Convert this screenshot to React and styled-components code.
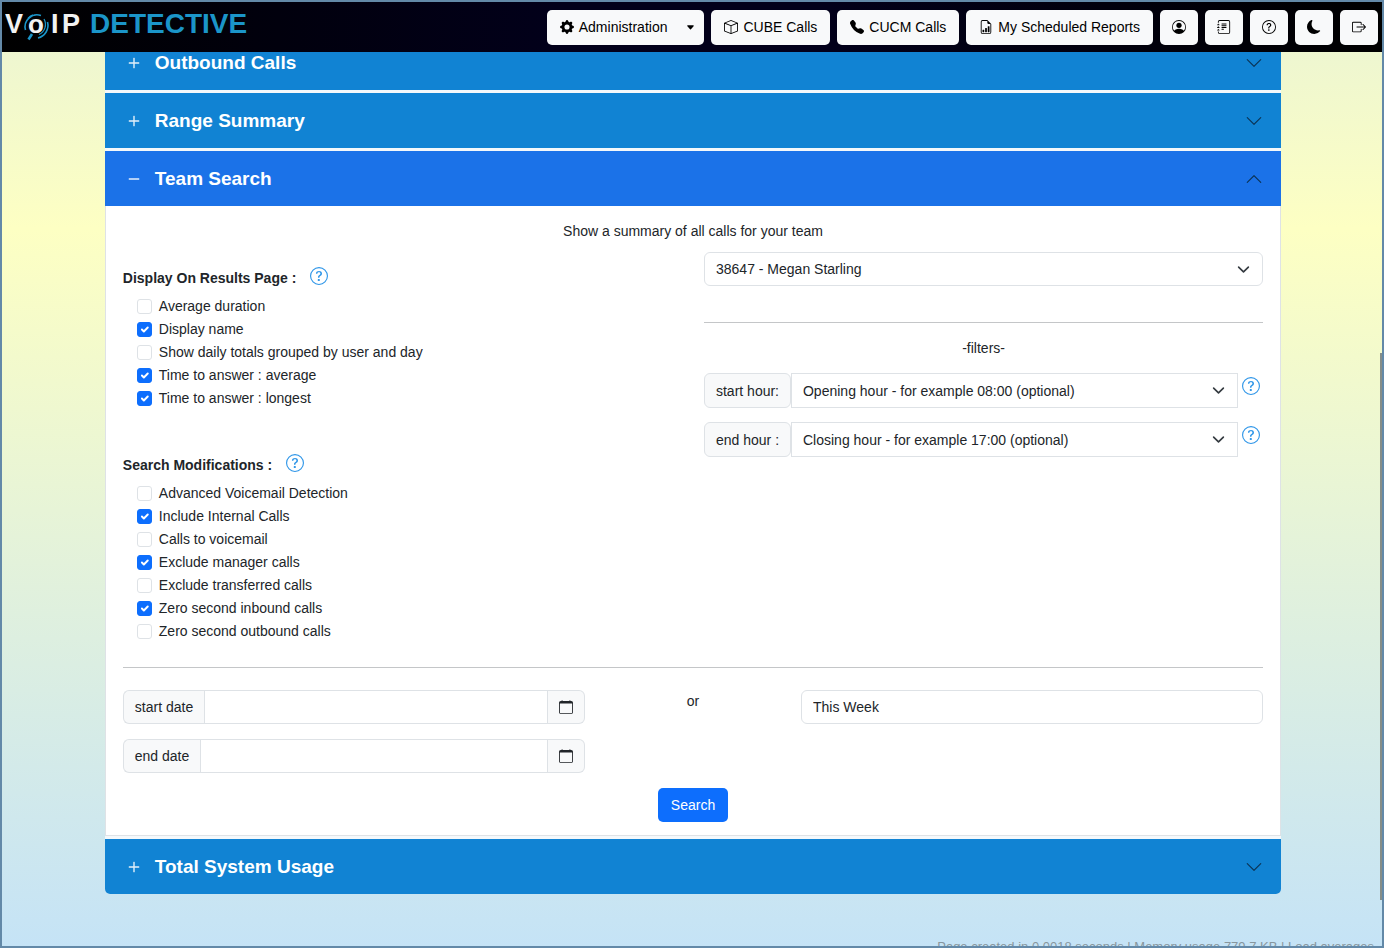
import React, { useId, useState } from 'react'
import styled, { createGlobalStyle, css } from 'styled-components'
import {
    BsGearFill,
    BsBox,
    BsTelephoneFill,
    BsFileEarmarkBarGraph,
    BsPersonCircle,
    BsJournalText,
    BsQuestionCircle,
    BsMoonFill,
    BsBoxArrowRight,
    BsCalendar,
    BsChevronDown,
    BsPlusLg,
    BsDashLg,
    BsCaretDownFill
} from 'react-icons/bs'

const GlobalStyle = createGlobalStyle`
    *, *::before, *::after {
        box-sizing: border-box;
    }
    body {
        margin: 0;
        font-family: "Liberation Sans", Arial, sans-serif;
        font-size: 14px;
        line-height: 22px;
        color: #212529;
    }
    button, input, select {
        font: inherit;
        color: inherit;
        margin: 0;
    }
`

const border = '1px solid #dee2e6'

const Frame = styled.div`
    position: relative;
    display: flex;
    flex-direction: column;
    height: 100vh;
    overflow: hidden;
    border: 2px solid #6389a8;
    background: linear-gradient(#eaf4d4 0%, #fdffc3 24%, #c5e3f6 100%);
`

const TopBar = styled.header`
    position: relative;
    z-index: 1;
    flex: none;
    display: flex;
    align-items: center;
    justify-content: space-between;
    height: 50px;
    padding: 0 4px 0 3px;
    background: linear-gradient(90deg, #000 0%, #02001a 40%, #02001a 60%, #000 100%);
`

const Logo = styled.a`
    display: block;
    align-self: flex-start;
    padding-top: 5px;
    line-height: 0;
`

const Actions = styled.nav`
    display: flex;
    gap: 7px;
`

const NavButton = styled.button`
    display: flex;
    align-items: center;
    gap: 5px;
    height: 35px;
    padding: 0 13px;
    border: 0;
    border-radius: 5px;
    background: #f8f9fa;
    color: #000;
    cursor: pointer;

    ${props => props.$square && css`
        justify-content: center;
        width: 38px;
        padding: 0;
    `}
`

const Caret = styled(BsCaretDownFill)`
    margin-left: 14px;
    margin-right: -4px;
`

const Page = styled.main`
    padding-left: 2px;
`

const Content = styled.div`
    width: 85vw;
    margin: -17px auto 0;
`

const Accordion = styled.div`
    display: flex;
    flex-direction: column;
    gap: 3px;
    background: #f4f8fb;
    border-radius: 0 0 5px 5px;
    overflow: hidden;
`

const Heading = styled.h2`
    margin: 0;
    font-size: 19px;
    line-height: 24px;
`

const HeadingButton = styled.button`
    display: flex;
    align-items: center;
    width: 100%;
    height: 55px;
    padding: 0 18px 0 22px;
    border: 0;
    background: ${props => props.$open ? '#1b72e8' : '#1183d3'};
    color: #fff;
    font-weight: bold;
    text-align: left;
    cursor: pointer;

    svg:first-child {
        stroke: currentColor;
        stroke-width: 0.4;
    }
`

const HeadingText = styled.span`
    flex: 1;
    padding-left: 14px;
`

const Chevron = styled(BsChevronDown)`
    color: #0b3354;
    transform: ${props => props.$open ? 'rotate(180deg)' : 'none'};
`

const Panel = styled.div`
    padding: 14px 17px 13px;
    border: ${border};
    border-top: 0;
    background: #fff;
`

const Intro = styled.p`
    margin: 0 0 10px;
    text-align: center;
`

const Columns = styled.div`
    display: grid;
    grid-template-columns: 1fr 1fr;
    column-gap: 22px;
    margin-bottom: 24px;
`

const Options = styled.fieldset`
    margin: 0;
    padding: 0 0 41px;
    border: 0;
    min-width: 0;

    &:last-child {
        padding-bottom: 0;
    }
`

const HelpButton = styled.button`
    display: flex;
    align-self: flex-start;
    flex: none;
    padding: 0;
    border: 0;
    background: none;
    color: #2f96e8;
    cursor: pointer;
`

const Legend = styled.legend`
    display: flex;
    gap: 14px;
    padding: 3px 0 0;
    margin-bottom: 6px;
    font-weight: bold;
`

const CheckRow = styled.label`
    display: flex;
    align-items: center;
    gap: 7px;
    padding-left: 14px;
    line-height: 23px;
`

const tick = "url(\"data:image/svg+xml,%3Csvg xmlns='http://www.w3.org/2000/svg' viewBox='0 0 20 20'%3E%3Cpath fill='none' stroke='%23fff' stroke-linecap='round' stroke-linejoin='round' stroke-width='3' d='m6 10 3 3 6-6'/%3E%3C/svg%3E\")"

const Checkbox = styled.input`
    appearance: none;
    width: 15px;
    height: 15px;
    border: ${border};
    border-radius: 3px;
    background: #fff;

    &:checked {
        border-color: #0d6efd;
        background: #0d6efd ${tick} center / contain no-repeat;
    }
`

const LeftColumn = styled.div`
    padding-top: 12px;
`

const Rule = styled.hr`
    width: 100%;
    height: 1px;
    margin: 0;
    border: 0;
    background: #c4c6c8;
`

const SelectWrap = styled.div`
    position: relative;
    flex: 1;
    display: flex;
    min-width: 0;

    svg {
        position: absolute;
        right: 13px;
        top: 11px;
        pointer-events: none;
    }
`

const Select = styled.select`
    appearance: none;
    width: 100%;
    height: ${props => props.$grouped ? '35px' : '34px'};
    padding: 0 36px 0 11px;
    border: ${border};
    border-radius: ${props => props.$grouped ? '0' : '6px'};
    background: #fff;
`

const Filters = styled.div`
    display: flex;
    flex-direction: column;
    gap: 14px;
    margin-top: 36px;
`

const FiltersTitle = styled.p`
    margin: 0;
    text-align: center;
`

const FilterRow = styled.div`
    display: flex;

    ${HelpButton} {
        margin: 4px 3px 0 4px;
    }
`

const Addon = styled.label`
    display: flex;
    align-items: center;
    padding: 0 11px;
    border: ${border};
    border-right: 0;
    border-radius: 6px 0 0 6px;
    background: #f8f9fa;
    white-space: nowrap;

    ${props => props.$rounded && css`
        width: 87px;
        border-right: ${border};
        border-radius: 6px;
    `}
`

const Dates = styled.div`
    display: grid;
    grid-template-columns: 462fr 216fr 462fr;
    margin: 22px 0 15px;
`

const DateFields = styled.div`
    display: flex;
    flex-direction: column;
    gap: 15px;
`

const InputGroup = styled.div`
    display: flex;
    height: 34px;
`

const TextInput = styled.input`
    flex: 1;
    min-width: 0;
    width: 100%;
    height: 34px;
    padding: 0 11px;
    border: ${border};
    border-radius: ${props => props.$grouped ? '0' : '6px'};
    background: #fff;
`

const CalendarButton = styled.button`
    display: flex;
    align-items: center;
    justify-content: center;
    width: 37px;
    border: ${border};
    border-left: 0;
    border-radius: 0 6px 6px 0;
    background: #f8f9fa;
    cursor: pointer;
`

const SearchButton = styled.button`
    display: block;
    height: 34px;
    margin: 0 auto;
    padding: 0 13px;
    border: 0;
    border-radius: 5px;
    background: #0d6efd;
    color: #fff;
    cursor: pointer;
`

const Or = styled.span`
    text-align: center;
`

const Footer = styled.footer`
    margin-top: 42px;
    padding-right: 8px;
    color: #87969d;
    font-size: 13px;
    text-align: right;
    white-space: nowrap;
`

const ScrollThumb = styled.div`
    position: absolute;
    z-index: 2;
    top: 351px;
    right: 0;
    width: 2px;
    height: 547px;
    background: #858d88;
`

const displayOptions = [
    { txt: 'Average duration', checked: false },
    { txt: 'Display name', checked: true },
    { txt: 'Show daily totals grouped by user and day', checked: false },
    { txt: 'Time to answer : average', checked: true },
    { txt: 'Time to answer : longest', checked: true }
]

const searchOptions = [
    { txt: 'Advanced Voicemail Detection', checked: false },
    { txt: 'Include Internal Calls', checked: true },
    { txt: 'Calls to voicemail', checked: false },
    { txt: 'Exclude manager calls', checked: true },
    { txt: 'Exclude transferred calls', checked: false },
    { txt: 'Zero second inbound calls', checked: true },
    { txt: 'Zero second outbound calls', checked: false }
]

const iconButtons = [
    { label: 'Account', Icon: BsPersonCircle },
    { label: 'Log', Icon: BsJournalText },
    { label: 'Help', Icon: BsQuestionCircle },
    { label: 'Dark mode', Icon: BsMoonFill },
    { label: 'Sign out', Icon: BsBoxArrowRight }
]

const BrandLogo = () => (
    <svg width="250" height="36" viewBox="0 0 250 36" role="img" aria-label="VoIP Detective">
        <g fontFamily="Liberation Sans, Arial, sans-serif" fontWeight="bold" fontSize="27">
            <text x="0" y="26" fill="#f2f2f2">V</text>
            <text x="23" y="26" fontSize="26" fill="#f2f2f2">o</text>
            <text x="46" y="26" fill="#f2f2f2">I</text>
            <text x="57" y="26" fill="#f2f2f2">P</text>
            <text x="85" y="26" fontSize="28" fill="#1b95c9">DETECTIVE</text>
        </g>
        <g fill="none" stroke="#1b95c9">
            <path d="M20.500 23 A12 12 0 0 1 36 8.500" strokeWidth="1.600" />
            <path d="M23 11.500 A12 12 0 0 1 28 8" strokeWidth="1.600" />
            <path d="M42.500 15 A13 13 0 0 1 33 31" strokeWidth="1.600" />
            <path d="M39 12 A11 11 0 0 1 34 27.500" strokeWidth="1.200" />
            <path d="M27 27 L23.500 32.500" strokeWidth="2.600" />
        </g>
    </svg>
)

const SelectArrow = () => (
    <svg width="13" height="13" viewBox="0 0 16 16" aria-hidden="true">
        <path fill="none" stroke="#343a40" strokeLinecap="round" strokeLinejoin="round" strokeWidth="2" d="m2 5 6 6 6-6" />
    </svg>
)

const Help = ({ label }) => (
    <HelpButton type="button" aria-label={label}>
        <BsQuestionCircle size={18} />
    </HelpButton>
)

const CheckList = ({ title, options }) => {
    const [values, setValues] = useState(options.map(option => option.checked))

    const onToggle = (index) => {
        setValues(values.map((value, i) => i === index ? !value : value))
    }

    return (
        <Options>
            <Legend>
                {title}
                <Help label={`Help: ${title}`} />
            </Legend>
            {options.map((option, i) =>
                <CheckRow key={option.txt}>
                    <Checkbox type="checkbox" checked={values[i]} onChange={() => onToggle(i)} />
                    {option.txt}
                </CheckRow>)}
        </Options>
    )
}

const Section = ({ title, open, onToggle, children }) => (
    <section>
        <Heading>
            <HeadingButton type="button" $open={open} aria-expanded={open} onClick={onToggle}>
                {open ? <BsDashLg size={14} /> : <BsPlusLg size={14} />}
                <HeadingText>{title}</HeadingText>
                <Chevron size={18} $open={open} />
            </HeadingButton>
        </Heading>
        {open && children}
    </section>
)

const HourFilter = ({ label, placeholder }) => {
    const id = useId()

    return (
        <FilterRow>
            <Addon htmlFor={id} $rounded>{label}</Addon>
            <SelectWrap>
                <Select id={id} $grouped>
                    <option>{placeholder}</option>
                </Select>
                <SelectArrow />
            </SelectWrap>
            <Help label={`Help: ${label}`} />
        </FilterRow>
    )
}

const DateField = ({ label }) => {
    const id = useId()

    return (
        <InputGroup>
            <Addon htmlFor={id}>{label}</Addon>
            <TextInput id={id} type="text" $grouped />
            <CalendarButton type="button" aria-label={`Pick ${label}`}>
                <BsCalendar size={14} />
            </CalendarButton>
        </InputGroup>
    )
}

const TeamSearch = () => (
    <Panel>
        <Intro>Show a summary of all calls for your team</Intro>
        <Columns>
            <LeftColumn>
                <CheckList title="Display On Results Page :" options={displayOptions} />
                <CheckList title="Search Modifications :" options={searchOptions} />
            </LeftColumn>
            <div>
                <SelectWrap>
                    <Select aria-label="Team manager">
                        <option>38647 - Megan Starling</option>
                    </Select>
                    <SelectArrow />
                </SelectWrap>
                <Filters>
                    <Rule />
                    <FiltersTitle>-filters-</FiltersTitle>
                    <HourFilter label="start hour:" placeholder="Opening hour - for example 08:00 (optional)" />
                    <HourFilter label="end hour :" placeholder="Closing hour - for example 17:00 (optional)" />
                </Filters>
            </div>
        </Columns>
        <Rule />
        <Dates>
            <DateFields>
                <DateField label="start date" />
                <DateField label="end date" />
            </DateFields>
            <Or>or</Or>
            <TextInput type="text" aria-label="Date range" defaultValue="This Week" />
        </Dates>
        <SearchButton type="submit">Search</SearchButton>
    </Panel>
)

const App = () => {
    const [openSection, setOpenSection] = useState('Team Search')

    const sectionProps = (title) => ({
        title,
        open: openSection === title,
        onToggle: () => setOpenSection(openSection === title ? '' : title)
    })

    return (
        <>
            <GlobalStyle />
            <Frame>
                <TopBar>
                    <Logo href="/"><BrandLogo /></Logo>
                    <Actions>
                        <NavButton type="button" aria-haspopup="true"><BsGearFill size={14} />Administration<Caret size={9} /></NavButton>
                        <NavButton type="button"><BsBox size={14} />CUBE Calls</NavButton>
                        <NavButton type="button"><BsTelephoneFill size={14} />CUCM Calls</NavButton>
                        <NavButton type="button"><BsFileEarmarkBarGraph size={14} />My Scheduled Reports</NavButton>
                        {iconButtons.map(({ label, Icon }) =>
                            <NavButton type="button" key={label} aria-label={label} $square>
                                <Icon size={14} />
                            </NavButton>)}
                    </Actions>
                </TopBar>
                <Page>
                    <Content>
                        <Accordion>
                            <Section {...sectionProps('Outbound Calls')} />
                            <Section {...sectionProps('Range Summary')} />
                            <Section {...sectionProps('Team Search')}>
                                <TeamSearch />
                            </Section>
                            <Section {...sectionProps('Total System Usage')} />
                        </Accordion>
                    </Content>
                </Page>
                <Footer>Page created in 0.0018 seconds | Memory usage 779.7 KB | Load averages</Footer>
                <ScrollThumb />
            </Frame>
        </>
    )
}

export default App
